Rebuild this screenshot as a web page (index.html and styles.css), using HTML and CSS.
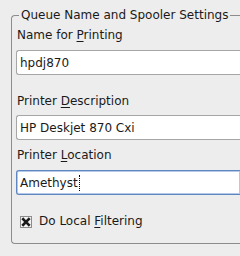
FILE: index.html
```html
<!DOCTYPE html>
<html lang="en">
<head>
  <meta charset="UTF-8" />
  <title>Queue Name and Spooler Settings</title>
  <link rel="stylesheet" href="styles.css">
</head>
<body>

  <fieldset class="group">
    <legend>Queue Name and Spooler Settings</legend>

    <div class="label first">Name for <u>P</u>rinting</div>
    <div class="entry">hpdj870</div>

    <div class="label gap">Printer <u>D</u>escription</div>
    <div class="entry">HP Deskjet 870 Cxi</div>

    <div class="label">Printer <u>L</u>ocation</div>
    <div class="entry focus">Amethyst<span class="caret"></span></div>

    <div class="check-row">
      <span class="check">
        <svg width="10" height="10" viewBox="0 0 10 10">
          <path d="M2.2 2.2 L7.8 7.8 M7.8 2.2 L2.2 7.8" stroke="#1a1a1a" stroke-width="2.6" stroke-linecap="square"/>
        </svg>
      </span>
      <span>Do Local <u>F</u>iltering</span>
    </div>
  </fieldset>

</body>
</html>
```

FILE: styles.css
```css
body {
  margin: 0;
  padding-top: 8px;
  background: #ededed;
  font-family: 'DejaVu Sans', sans-serif;
  font-size: 12px;
  color: #1a1a1a;
  overflow: hidden;
}
.group {
  margin: 0 0 0 11px;
  width: 229px;
  height: 236px;
  padding: 0 0 0 4px;
  border: 1px solid #8c8c8c;
  border-right: none;
  border-radius: 4px 0 0 4px;
  box-sizing: border-box;
}
.group legend {
  margin-left: 3px;
  padding: 0 2px;
  line-height: 14px;
}
.label {
  margin: 8px 0 8px 1px;
  line-height: 14px;
}
.label.first {
  margin-top: 6px;
}
.label.gap {
  margin-top: 19px;
  margin-bottom: 7px;
}
.label u,
.check-row u {
  text-decoration-thickness: 1px;
  text-underline-offset: 2px;
}
.entry {
  height: 25px;
  box-sizing: border-box;
  border: 1px solid #a6a6a6;
  border-right: none;
  border-radius: 3px 0 0 3px;
  background: #fff;
  padding: 0 0 0 3px;
  display: flex;
  align-items: center;
}
.entry.focus {
  border-color: #5f86c0;
  box-shadow: inset 0 0 0 1px #b4c9e8;
}
.caret {
  display: inline-block;
  width: 0;
  height: 16px;
  margin-left: 1px;
  border-left: 1px dotted #000;
}
.check-row {
  margin-top: 19px;
  margin-left: 4px;
  display: flex;
  align-items: center;
  gap: 7px;
  line-height: 15px;
}
.check {
  width: 12px;
  height: 12px;
  box-sizing: border-box;
  border: 1px solid #8c8c8c;
  background: #f4f4f4;
  display: flex;
  align-items: center;
  justify-content: center;
}
```
